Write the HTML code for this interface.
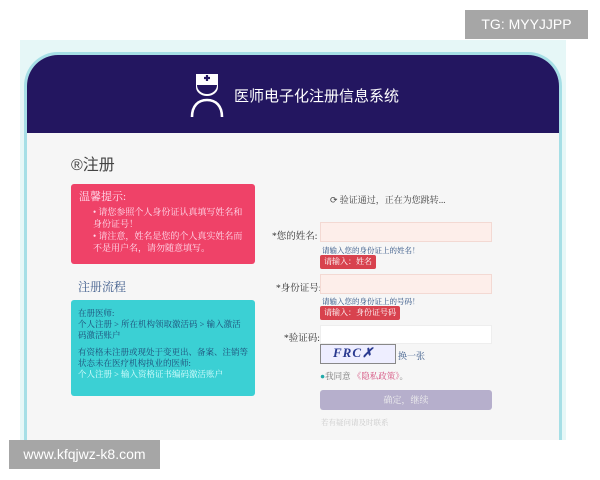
<!DOCTYPE html>
<html><head><meta charset="utf-8"><style>
*{margin:0;padding:0;box-sizing:border-box}
body{width:600px;height:480px;background:#fff;position:relative;overflow:hidden;font-family:"Liberation Serif","Noto Serif CJK SC",serif}
.a{position:absolute}
.frame{left:20px;top:40px;width:546px;height:400px;background:#e6f7f7}
.card{left:24px;top:52px;width:538px;height:388px;background:#f6f6f6;border-radius:34px 34px 0 0;border:3px solid #a6dfe6;border-bottom:none;overflow:hidden}
.hdr{left:0;top:0;width:100%;height:78px;background:#231660}
.t{font-family:"Liberation Sans","Noto Sans CJK SC",sans-serif}
.inp{background:#fdeeea;border:1px solid #f3d9d3;height:20px;width:172px}
.err{background:#d8424e;color:#fff;font-size:8px;height:14px;line-height:14px;padding:0 4px;border-radius:2px}
</style></head><body>
<div class="a frame"></div>
<div class="a card">
 <div class="a hdr">
  <svg class="a" style="left:161px;top:18px" width="40" height="46" viewBox="0 0 40 46">
   <path d="M8 1h22v13a11 9 0 0 1-22 0z" fill="#fff"/>
   <path d="M16 5h6M19 2v6" stroke="#231660" stroke-width="2.2" fill="none"/>
   <path d="M9 12h20a10 9 0 0 1-20 0z" fill="#231660"/>
   <path d="M4 44c0-11 6-17 15-17s15 6 15 17" stroke="#fff" stroke-width="2.6" fill="none"/>
  </svg>
  <div class="a t" style="left:207px;top:30px;font-size:15px;color:#fff">医师电子化注册信息系统</div>
 </div>
 <div class="a t" style="left:44px;top:96px;font-size:16px;color:#444">®注册</div>
</div>
<div class="a" style="left:71px;top:184px;width:184px;height:80px;background:#ef4268;border-radius:3px;color:#fde;font-size:9px;line-height:12px">
 <div style="padding:7px 0 0 8px;font-size:11px">温馨提示:</div>
 <div style="padding:3px 8px 0 22px">• 请您参照个人身份证认真填写姓名和身份证号！<br>• 请注意，姓名是您的个人真实姓名而不是用户名，请勿随意填写。</div>
</div>
<div class="a" style="left:78px;top:278px;font-size:12px;color:#3c5a8a">注册流程</div>
<div class="a" style="left:71px;top:300px;width:184px;height:96px;background:#3bd0d4;border-radius:3px;color:#1e4a77;font-size:8.5px;line-height:11px;padding:8px 7px">
 在册医师:<br>个人注册 &gt; 所在机构领取激活码 &gt; 输入激活码激活账户<br><div style="height:6px"></div>有资格未注册或现处于变更出、备案、注销等状态未在医疗机构执业的医师:<br><span style="color:#dff">个人注册 &gt; 输入资格证书编码激活账户</span>
</div>
<div class="a" style="left:330px;top:193px;font-size:9px;color:#444">⟳ 验证通过，正在为您跳转...</div>
<div class="a" style="left:272px;top:228px;font-size:9.5px;color:#333">*您的姓名:</div>
<div class="a inp" style="left:320px;top:222px"></div>
<div class="a" style="left:322px;top:245px;font-size:7.5px;color:#2b4e80">请输入您的身份证上的姓名！</div>
<div class="a err" style="left:320px;top:255px">请输入：姓名</div>
<div class="a" style="left:276px;top:280px;font-size:9.5px;color:#333">*身份证号:</div>
<div class="a inp" style="left:320px;top:274px"></div>
<div class="a" style="left:322px;top:296px;font-size:7.5px;color:#2b4e80">请输入您的身份证上的号码！</div>
<div class="a err" style="left:320px;top:306px">请输入：身份证号码</div>
<div class="a" style="left:284px;top:330px;font-size:9.5px;color:#333">*验证码:</div>
<div class="a" style="left:320px;top:325px;width:172px;height:19px;background:#fff;border:1px solid #eee"></div>
<div class="a" style="left:320px;top:344px;width:76px;height:20px;background:#eef;border:1px solid #888;font:italic bold 13px 'Liberation Serif',serif;color:#2a3a90;padding-left:12px;letter-spacing:1px">FRC✗</div>
<div class="a" style="left:398px;top:349px;font-size:9px;color:#3a5a8a">换一张</div>
<div class="a" style="left:320px;top:370px;font-size:8.5px;color:#777"><span style="color:#2aa;">●</span>我同意 <span style="color:#d44a7a">《隐私政策》</span>。</div>
<div class="a" style="left:320px;top:390px;width:172px;height:20px;background:#b6afcc;border-radius:3px;color:#eee;font-size:9px;text-align:center;line-height:20px">确定，继续</div>
<div class="a" style="left:321px;top:417px;font-size:7.5px;color:#ccc">若有疑问请及时联系</div>
<div class="a t" style="left:465px;top:10px;width:123px;height:29px;background:#a6a6a6;color:#fff;font-size:14px;line-height:29px;text-align:center">TG: MYYJJPP</div>
<div class="a t" style="left:9px;top:440px;width:151px;height:29px;background:#a6a6a6;color:#fff;font-size:14px;line-height:29px;text-align:center">www.kfqjwz-k8.com</div>
</body></html>
